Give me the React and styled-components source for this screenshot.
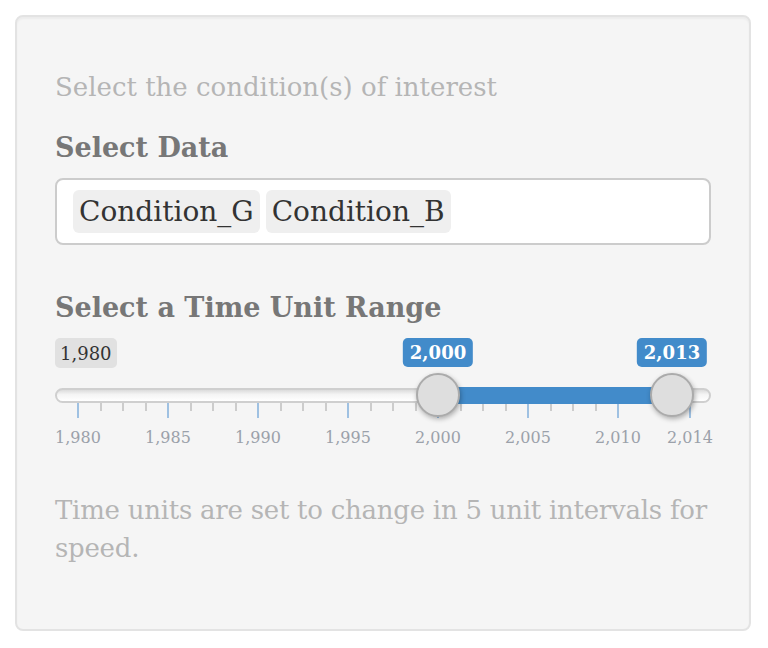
import React from 'react';
import styled, { createGlobalStyle } from 'styled-components';

const GlobalStyle = createGlobalStyle`
  html, body {
    margin: 0;
    padding: 0;
    background: #ffffff;
  }
  body {
    font-family: "DejaVu Serif", Georgia, serif;
  }
  *, *::before, *::after {
    box-sizing: border-box;
  }
`;

const Page = styled.div`
  padding: 15px 0 0 15px;
`;

const Well = styled.div`
  width: 736px;
  height: 616px;
  background: #f5f5f5;
  border: 2px solid #e3e3e3;
  border-radius: 8px;
  padding: 50px 38px 0;
  box-shadow: inset 0 2px 2px rgba(0, 0, 0, 0.04);
`;

const HelpText = styled.p`
  margin: 0 0 ${p => p.$gap ?? 21}px;
  font-size: 26px;
  line-height: ${p => p.$lh ?? 40}px;
  letter-spacing: ${p => (p.$tight ? '-0.25px' : 'normal')};
  color: #b5b5b5;
`;

const Label = styled.div`
  font-size: 27px;
  font-weight: bold;
  line-height: 40px;
  color: #777777;
  margin-bottom: 10px;
`;

const SelectBox = styled.div`
  height: 67px;
  margin-bottom: 43px;
  background: #ffffff;
  border: 2px solid #cccccc;
  border-radius: 8px;
  display: flex;
  align-items: center;
  gap: 6px;
  padding: 0 16px;
`;

const Chip = styled.span`
  height: 43px;
  display: flex;
  align-items: center;
  padding: 0 6px;
  background: #efefef;
  border-radius: 6px;
  font-size: 28px;
  color: #333333;
`;

/* range slider */

const Slider = styled.div`
  margin-bottom: 43px;
`;

const TagRow = styled.div`
  position: relative;
  height: 30px;
  display: flex;
`;

const Tag = styled.span`
  height: 30px;
  padding: 0 5px;
  display: flex;
  align-items: center;
  border-radius: 5px;
  font-size: 18px;
  white-space: nowrap;
  background: #e1e1e1;
  color: #333333;
`;

const ValueTag = styled(Tag)`
  position: absolute;
  top: 0;
  height: 29px;
  padding: 0 7px;
  transform: translateX(-50%);
  background: #428bca;
  color: #ffffff;
  font-weight: bold;
`;

const Track = styled.div`
  position: relative;
  margin-top: 20px;
  height: 15px;
  border: 2px solid #cfcfcf;
  border-radius: 8px;
  background: linear-gradient(to bottom, #dcdcdc 0%, #f4f4f4 40%, #ffffff 100%);
`;

const Bar = styled.div`
  position: absolute;
  top: -3px;
  height: 17px;
  background: #428bca;
`;

const Handle = styled.div`
  position: absolute;
  top: -17px;
  width: 44px;
  height: 44px;
  transform: translateX(-50%);
  border-radius: 50%;
  background: #dedede;
  border: 2px solid #ababab;
  box-shadow: 1px 2px 5px rgba(0, 0, 0, 0.3);
`;

const Grid = styled.div`
  display: flex;
  padding-left: ${p => p.$offset}px;
`;

const Segment = styled.div`
  flex: none;
  display: flex;
  align-items: flex-start;
`;

const Mark = styled.div`
  flex: 1;
  height: ${p => (p.$major ? 15 : 8)}px;
  border-left: 2px solid ${p => (p.$major ? '#9fc1e2' : '#cccccc')};
`;

const LabelRow = styled.div`
  display: flex;
  margin-top: 10px;
  padding-left: ${p => p.$offset}px;
  height: 20px;
`;

const LabelCell = styled.div`
  flex: none;
  font-size: 16px;
  line-height: 20px;
  color: #9ba1aa;
  white-space: nowrap;

  span {
    display: inline-block;
    transform: translateX(-50%);
  }
`;

const MIN = 1980;
const FROM = 2000;
const TO = 2013;
const ORIGIN = 23;
const PER_UNIT = 18;
const MAJORS = [1980, 1985, 1990, 1995, 2000, 2005, 2010, 2014];

const pos = v => ORIGIN + (v - MIN) * PER_UNIT;
const fmt = v => v.toLocaleString('en-US');

const segments = MAJORS.map((v, i) => ({
  value: v,
  width: i < MAJORS.length - 1 ? (MAJORS[i + 1] - v) * PER_UNIT : 0,
  minors: i < MAJORS.length - 2 ? 3 : 0,
}));

function RangeSlider() {
  const from = pos(FROM);
  const to = pos(TO);
  return (
    <Slider>
      <TagRow>
        <Tag>{fmt(MIN)}</Tag>
        <ValueTag style={{ left: from }}>{fmt(FROM)}</ValueTag>
        <ValueTag style={{ left: to }}>{fmt(TO)}</ValueTag>
      </TagRow>
      <Track>
        <Bar style={{ left: from - 2, width: to - from }} />
        <Handle style={{ left: from - 2 }} />
        <Handle style={{ left: to - 2 }} />
      </Track>
      <Grid $offset={ORIGIN - 1}>
        {segments.map(s => (
          <Segment key={s.value} style={{ width: s.width || 2 }}>
            <Mark $major />
            {Array.from({ length: s.minors }, (_, k) => (
              <Mark key={k} />
            ))}
          </Segment>
        ))}
      </Grid>
      <LabelRow $offset={ORIGIN}>
        {segments.map(s => (
          <LabelCell key={s.value} style={{ width: s.width }}>
            <span>{fmt(s.value)}</span>
          </LabelCell>
        ))}
      </LabelRow>
    </Slider>
  );
}

export default function App() {
  return (
    <>
      <GlobalStyle />
      <Page>
        <Well>
          <HelpText>Select the condition(s) of interest</HelpText>
          <Label>Select Data</Label>
          <SelectBox>
            <Chip>Condition_G</Chip>
            <Chip>Condition_B</Chip>
          </SelectBox>
          <Label>Select a Time Unit Range</Label>
          <RangeSlider />
          <HelpText $gap={0} $lh={38} $tight>
            Time units are set to change in 5 unit intervals for speed.
          </HelpText>
        </Well>
      </Page>
    </>
  );
}
